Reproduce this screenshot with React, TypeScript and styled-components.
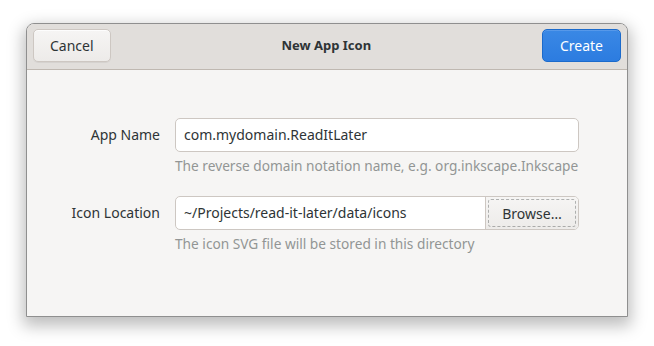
import React from 'react';
import styled, { createGlobalStyle } from 'styled-components';

const Global = createGlobalStyle`
html, body, #root {
    margin: 0;
    padding: 0;
    height: 100%;
    background: #ffffff;
}
body {
    font-family: "Noto Sans", "Open Sans", sans-serif;
    color: #2e3436;
}
`

const Page = styled.div`
box-sizing: border-box;
height: 100%;
padding: 23px 0 0 26px;
`

const Window = styled.div`
width: 600px;
height: 292px;
display: flex;
flex-direction: column;
border: 1px solid #8f8f8f;
border-radius: 8px 8px 0 0;
background: #f6f5f4;
box-shadow: 0 6px 16px 3px rgba(0, 0, 0, 0.26);
overflow: hidden;
`

const HeaderBar = styled.header`
display: flex;
align-items: flex-start;
justify-content: space-between;
height: 40px;
padding: 5px 6px 0;
background: #e1dedb;
border-bottom: 1px solid #bfb8b1;
`

const Title = styled.span`
line-height: 33px;
font-size: 13px;
font-weight: 700;
color: #2e3436;
`

interface IBtn {
    suggested?: boolean,
}
const HeaderBtn = styled.button<IBtn>`
box-sizing: border-box;
height: 33px;
padding: 0 16px;
min-width: 77px;
font-family: inherit;
font-size: 14px;
border-radius: 5px;
border: 1px solid #cdc7c2;
color: #2e3436;
background: linear-gradient(#f6f5f4, #edebe9);
box-shadow: inset 0 1px rgba(255, 255, 255, 0.8), 0 1px rgba(0, 0, 0, 0.05);
${({ suggested }) => suggested && `
    min-width: 79px;
    color: #ffffff;
    border-color: #1b6acb;
    background: linear-gradient(#3a88e5, #2c7ce0);
    box-shadow: inset 0 1px rgba(255, 255, 255, 0.15);
`}
`

const Body = styled.div`
flex: 1;
padding: 48px 0 0 48px;
`

const Form = styled.div`
display: grid;
grid-template-columns: 85px 404px;
column-gap: 15px;
`

const Label = styled.label`
height: 33px;
display: flex;
align-items: center;
justify-content: flex-end;
font-size: 14px;
color: #2e3436;
white-space: nowrap;
`

const Field = styled.div`
display: flex;
flex-direction: column;
`

const EntryBox = styled.div`
box-sizing: border-box;
height: 34px;
display: flex;
border: 1px solid #cdc7c2;
border-radius: 5px;
background: #ffffff;
overflow: hidden;
`

const EntryText = styled.div`
flex: 1;
display: flex;
align-items: center;
padding: 0 8px 1px;
font-size: 14px;
color: #2e3436;
`

const Browse = styled.div`
width: 92px;
display: flex;
align-items: center;
justify-content: center;
border-left: 1px solid #cdc7c2;
background: linear-gradient(#f6f5f4, #edebe9);
font-size: 14px;
color: #2e3436;
position: relative;
&::after {
    content: '';
    position: absolute;
    inset: 2px;
    border: 1px dashed rgba(46, 52, 54, 0.35);
    border-radius: 3px;
}
`

const Hint = styled.div`
height: 20px;
margin-top: 4px;
margin-bottom: 20px;
font-size: 13.7px;
line-height: 20px;
color: #929595;
white-space: nowrap;
`

const App = () => {
    return (
        <>
            <Global />
            <Page>
                <Window>
                    <HeaderBar>
                        <HeaderBtn>Cancel</HeaderBtn>
                        <Title>New App Icon</Title>
                        <HeaderBtn suggested>Create</HeaderBtn>
                    </HeaderBar>
                    <Body>
                        <Form>
                            <Label>App Name</Label>
                            <Field>
                                <EntryBox>
                                    <EntryText>com.mydomain.ReadItLater</EntryText>
                                </EntryBox>
                                <Hint>The reverse domain notation name, e.g. org.inkscape.Inkscape</Hint>
                            </Field>
                            <Label>Icon Location</Label>
                            <Field>
                                <EntryBox>
                                    <EntryText>~/Projects/read-it-later/data/icons</EntryText>
                                    <Browse>Browse…</Browse>
                                </EntryBox>
                                <Hint>The icon SVG file will be stored in this directory</Hint>
                            </Field>
                        </Form>
                    </Body>
                </Window>
            </Page>
        </>
    );
};

export default App;
